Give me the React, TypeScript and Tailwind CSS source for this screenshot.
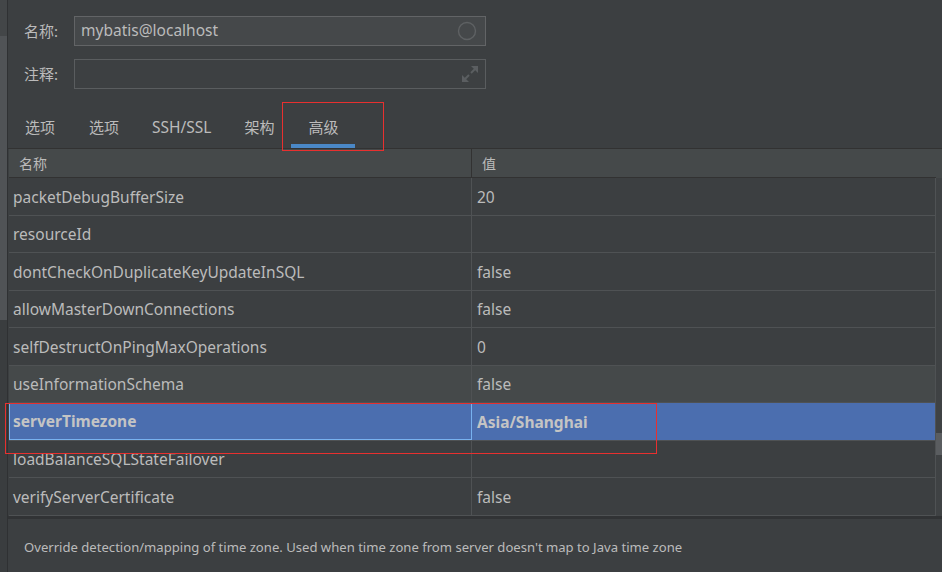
import React from 'react';

type Row = { name: string; value: string; hover?: boolean; selected?: boolean };

const rows: Row[] = [
  { name: 'packetDebugBufferSize', value: '20' },
  { name: 'resourceId', value: '' },
  { name: 'dontCheckOnDuplicateKeyUpdateInSQL', value: 'false' },
  { name: 'allowMasterDownConnections', value: 'false' },
  { name: 'selfDestructOnPingMaxOperations', value: '0' },
  { name: 'useInformationSchema', value: 'false', hover: true },
  { name: 'serverTimezone', value: 'Asia/Shanghai', selected: true },
  { name: 'loadBalanceSQLStateFailover', value: '' },
  { name: 'verifyServerCertificate', value: 'false' },
];

const tabs = ['选项', '选项', 'SSH/SSL', '架构', '高级'];

const font = { fontFamily: '"Noto Sans", "Noto Sans CJK SC", sans-serif' };

const ExpandIcon = () => (
  <svg width="16" height="16" viewBox="0 0 16 16" className="shrink-0">
    <polygon points="9,0 16,0 16,7" fill="#5b5e61" />
    <line x1="13" y1="3" x2="9" y2="7" stroke="#5b5e61" strokeWidth="2" />
    <polygon points="0,9 0,16 7,16" fill="#5b5e61" />
    <line x1="3" y1="13" x2="7" y2="9" stroke="#5b5e61" strokeWidth="2" />
  </svg>
);

const App = () => {
  return (
    <div
      className="relative flex w-[942px] h-[572px] overflow-hidden bg-[#3c3f41] text-[#bbbbbb] text-[15.5px]"
      style={font}
    >
      {/* left edge strip */}
      <div className="flex flex-col w-[7px]">
        <div className="h-[36px] bg-[#434648]" />
        <div className="h-[284px] bg-[#505356]" />
        <div className="flex-1 bg-[#3a3d3f]" />
      </div>
      <div className="w-px bg-[#2f3133]" />

      <div className="flex flex-col flex-1 min-w-0">
        {/* form */}
        <div className="pl-[16px] pt-[16px]">
          <div className="flex items-center h-[30px]">
            <span className="w-[50px] text-[15px]">名称:</span>
            <div className="flex items-center justify-between w-[412px] h-[30px] border border-[#626466] bg-[#45484a] pl-[6px] pr-[8px]">
              <span>mybatis@localhost</span>
              <svg width="20" height="20" viewBox="0 0 20 20">
                <circle cx="10" cy="10" r="8.5" fill="none" stroke="#5e6163" strokeWidth="1.4" />
              </svg>
            </div>
          </div>
          <div className="flex items-center h-[30px] mt-[13px]">
            <span className="w-[50px] text-[15px]">注释:</span>
            <div className="flex items-center justify-end w-[412px] h-[30px] border border-[#5a5d5f] bg-[#3d4042] pr-[7px]">
              <ExpandIcon />
            </div>
          </div>
        </div>

        {/* tabs */}
        <div className="flex items-end h-[59px] text-[15px]">
          {tabs.map((t, i) => (
            <div key={i} className={i === 2 ? 'flex flex-col items-stretch px-[16px] text-[15.5px]' : 'flex flex-col items-stretch px-[17px]'}>
              <span className="leading-[20px] text-center">{t}</span>
              <div className={i === 4 ? 'h-[4px] mt-[7px] -mx-[17px] bg-[#4a88c7]' : 'h-[4px] mt-[7px]'} />
            </div>
          ))}
        </div>
        <div className="h-px bg-[#323232]" />

        {/* table */}
        <div className="flex ml-px">
          <div className="flex flex-col w-[927px]">
            <div className="flex h-[29px] bg-[#45494a] border-b border-[#323232] text-[14px]">
              <div className="flex items-center w-[463px] pl-[10px] border-r border-[#323232]">名称</div>
              <div className="flex items-center flex-1 pl-[10px]">值</div>
            </div>
            {rows.map((r, i) => (
              <div
                key={r.name}
                className={[
                  'flex border-b border-r border-[#4f5254]',
                  i % 2 === 0 ? 'h-[38px]' : 'h-[37px]',
                  r.selected ? 'bg-[#4b6eaf] font-bold text-[#c4c4c4]' : r.hover ? 'bg-[#45494a]' : '',
                ].join(' ')}
              >
                <div
                  className={
                    r.selected
                      ? 'flex items-center w-[463px] pl-[3px] pt-[1px] border border-[#78b1ef]'
                      : 'flex items-center w-[463px] pl-[4px] pt-[2px] border-r border-[#4f5254]'
                  }
                >
                  {r.name}
                </div>
                <div className="flex items-center flex-1 pl-[5px] pt-[2px]">{r.value}</div>
              </div>
            ))}
          </div>
          {/* scrollbar */}
          <div className="flex flex-col w-[6px] bg-[#3f4244]">
            <div className="h-[29px] bg-[#45494a]" />
            <div className="h-[255px]" />
            <div className="h-[22px] bg-[#5a5d60]" />
          </div>
        </div>

        {/* description */}
        <div className="flex items-center flex-1 pl-[16px] border-t-[3px] border-[#313335] text-[13.1px] pt-[5px]">
          Override detection/mapping of time zone. Used when time zone from server doesn't map to Java time zone
        </div>
      </div>

      {/* red annotation boxes */}
      <div className="absolute left-[282px] top-[102px] w-[102px] h-[49px] border border-[#e8302f]" />
      <div className="absolute left-[5px] top-[403px] w-[652px] h-[51px] border border-[#e8302f]" />
    </div>
  );
};

export default App;
